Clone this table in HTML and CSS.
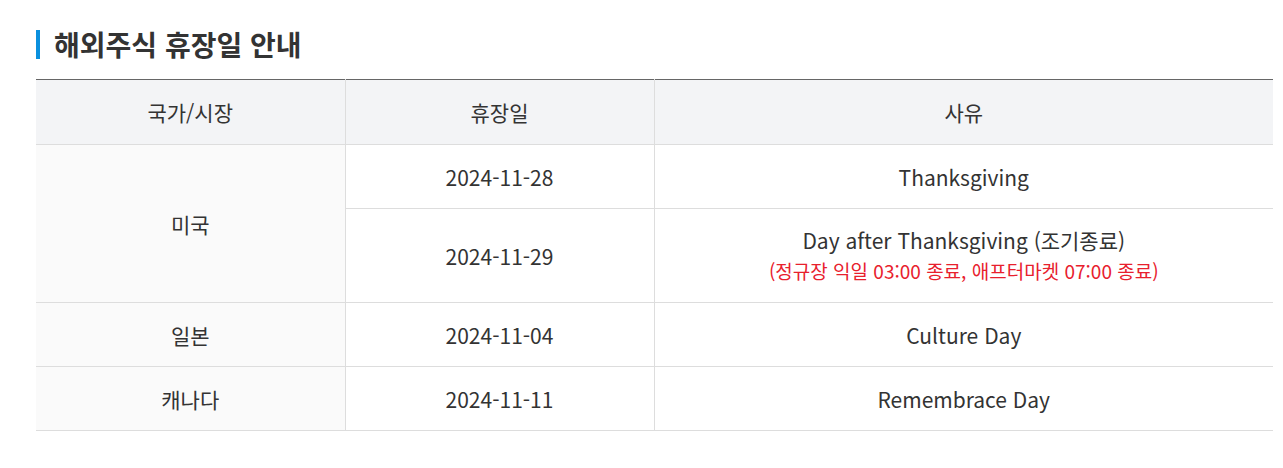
FILE: index.html
```html
<!DOCTYPE html>
<html lang="ko">
<head>
<meta charset="utf-8">
<title>해외주식 휴장일 안내</title>
<link rel="stylesheet" href="styles.css">
</head>
<body>
<div class="wrap">
  <h2 class="title">해외주식 휴장일 안내</h2>
  <table class="holidays">
    <colgroup>
      <col class="c1"><col class="c2"><col class="c3">
    </colgroup>
    <thead>
      <tr><th>국가/시장</th><th>휴장일</th><th>사유</th></tr>
    </thead>
    <tbody>
      <tr class="r1">
        <td class="country" rowspan="2">미국</td>
        <td>2024-11-28</td>
        <td>Thanksgiving</td>
      </tr>
      <tr class="r2">
        <td>2024-11-29</td>
        <td>Day after Thanksgiving (조기종료)<br><span class="note">(정규장 익일 03:00 종료, 애프터마켓 07:00 종료)</span></td>
      </tr>
      <tr class="r1">
        <td class="country">일본</td>
        <td>2024-11-04</td>
        <td>Culture Day</td>
      </tr>
      <tr class="r1">
        <td class="country">캐나다</td>
        <td>2024-11-11</td>
        <td>Remembrace Day</td>
      </tr>
    </tbody>
  </table>
</div>
</body>
</html>
```
FILE: styles.css
```css
html, body {
  margin: 0;
  padding: 0;
  background: #fff;
}
body {
  font-family: "Noto Sans CJK KR", "Noto Sans", sans-serif;
  color: #333;
}
.wrap {
  padding: 30px 10px 0 36px;
}
.title {
  margin: 0 0 20px 0;
  padding-left: 14px;
  border-left: 4px solid #0a90de;
  font-size: 28px;
  line-height: 29px;
  font-weight: 700;
  color: #333;
  letter-spacing: 0;
}
.holidays {
  width: 1237px;
  border-collapse: collapse;
  table-layout: fixed;
  border-top: 1px solid #666;
}
.c1, .c2 { width: 309px; }
.holidays th {
  height: 64px;
  background: #f3f4f6;
  font-weight: 400;
  font-size: 21px;
  color: #333;
  border-bottom: 1px solid #ddd;
  border-left: 1px solid #ddd;
  padding: 0;
}
.holidays td {
  text-align: center;
  font-size: 21px;
  color: #333;
  border-bottom: 1px solid #ddd;
  border-left: 1px solid #ddd;
  padding: 0;
  line-height: 30px;
}
.holidays th:first-child,
.holidays td.country {
  border-left: none;
}
.holidays td.country {
  background: #fafafa;
}
.r1 td { height: 63px; }
.r2 td { height: 93px; }
.note {
  color: #e8202d;
  font-size: 19px;
  line-height: 30px;
}
```
